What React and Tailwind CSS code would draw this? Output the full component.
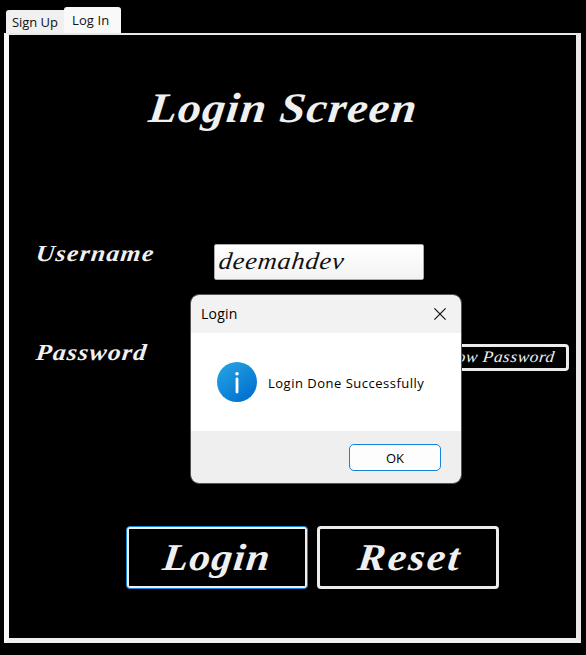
const script = "font-['Liberation_Serif',serif] italic whitespace-nowrap block";
const ui = "font-['Open_Sans','Noto_Sans',sans-serif]";

function Tabs() {
  return (
    <div className={`${ui} flex items-end pl-[6px] h-[33px] text-[13px] text-[#111]`}>
      <div className="w-[58px] h-[23px] rounded-tl-[3px] bg-[#f0f0f0] pl-[6px] leading-[25px] tracking-[-0.05px] whitespace-nowrap">Sign Up</div>
      <div className="w-[57px] h-[26px] rounded-t-[3px] bg-[#f9f9f9] pl-[8px] leading-[26px] tracking-[0.1px] whitespace-nowrap">Log In</div>
    </div>
  );
}

function InfoIcon() {
  return (
    <svg width="40" height="40" viewBox="0 0 40 40" className="shrink-0">
      <defs>
        <linearGradient id="info" x1="0.15" y1="0.1" x2="0.8" y2="0.95">
          <stop offset="0" stopColor="#22a0e2" />
          <stop offset="1" stopColor="#0070d0" />
        </linearGradient>
      </defs>
      <circle cx="20" cy="20" r="20" fill="url(#info)" />
      <circle cx="20" cy="11.7" r="1.8" fill="#fff" />
      <path d="M20 17V30" stroke="#fff" strokeWidth="2.8" strokeLinecap="round" />
    </svg>
  );
}

function Dialog() {
  return (
    <div className={`${ui} absolute left-[191px] top-[295px] w-[270px] h-[188px] rounded-[8px] overflow-hidden bg-white flex flex-col text-black outline outline-1 outline-[#555]`}>
      <div className="h-[38px] bg-[#f2f2f2] flex items-center justify-between pl-[10px] pr-[15px]">
        <span className="text-[14px] tracking-[0.2px] -mt-[2px]">Login</span>
        <svg width="12" height="12" viewBox="0 0 12 12">
          <path d="M0.4 0.4L11.6 11.6M11.6 0.4L0.4 11.6" stroke="#111" strokeWidth="1.2" />
        </svg>
      </div>
      <div className="h-[98px] flex items-center pl-[26px] gap-[11px]">
        <InfoIcon />
        <span className="text-[13px] tracking-[0.5px] whitespace-nowrap pt-[3px]">Login Done Successfully</span>
      </div>
      <div className="flex-1 bg-[#efefef] flex justify-end pr-[20px] pt-[13px]">
        <button className="w-[92px] h-[27px] rounded-[5px] border-[1.5px] border-[#1683d8] bg-[#fdfdfd] text-[13px] leading-[24px]">OK</button>
      </div>
    </div>
  );
}

export default function App() {
  return (
    <div className="relative w-[586px] h-[655px] bg-black overflow-hidden text-[#f0f0f0]">
      <Tabs />
      <main className="ml-[4px] w-[577px] h-[610px] border-t-[2px] border-l-[5px] border-r-[5px] border-b-[5px] border-t-[#e8e8e8] border-l-[#f9f9f9] border-r-[#ebe9e8] border-b-[#f0f0f0] flex flex-col">
        <h1 className={`${script} origin-left scale-x-[1.1] -skew-x-6 font-bold text-[42px] leading-[48px] mt-[49px] ml-[140px] w-[260px] tracking-[1px]`}>Login Screen</h1>
        <div className="mt-[112px] ml-[27px] h-[36px] flex">
          <label className={`${script} origin-left scale-x-[1.12] -skew-x-6 font-bold w-[178px] h-[20px] text-[23px] leading-[20px] tracking-[1.1px]`}>Username</label>
          <div className="w-[210px] h-[36px] rounded-[2px] border border-[#aaa] bg-linear-to-b from-white to-[#f3f3f3] pl-[4px]">
            <span className={`${script} origin-left scale-x-[1.1] -skew-x-6 w-[150px] text-[24px] leading-[32px] text-[#111] tracking-[0.7px]`}>deemahdev</span>
          </div>
        </div>
        <div className="mt-[64px] ml-[27px] h-[27px] flex">
          <label className={`${script} origin-left scale-x-[1.12] -skew-x-6 font-bold w-[300px] h-[18px] text-[23px] leading-[18px] tracking-[1.1px]`}>Password</label>
          <div className="w-[233px] h-[27px] rounded-[4px] border-[3px] border-[#ececec] flex justify-end pr-[11px]">
            <span className={`${script} origin-right scale-x-[1.08] -skew-x-6 text-[16px] leading-[20px] tracking-[0.5px]`}>Show Password</span>
          </div>
        </div>
        <div className="mt-[155px] ml-[117px] flex gap-[9px]">
          <button className="w-[182px] h-[63px] rounded-[4px] border border-[#1683d8] bg-[#f0f0f0] p-[2px]">
            <span className="bg-black w-full h-full flex pl-[34px]">
              <span className={`${script} origin-left scale-x-[1.1] -skew-x-6 font-bold text-[38px] leading-[56px] tracking-[1px]`}>Login</span>
            </span>
          </button>
          <button className="w-[182px] h-[63px] rounded-[4px] border-[3px] border-[#ececec] flex pl-[38px]">
            <span className={`${script} origin-left scale-x-[1.1] -skew-x-6 font-bold text-[38px] leading-[56px] tracking-[2px]`}>Reset</span>
          </button>
        </div>
      </main>
      <Dialog />
    </div>
  );
}
